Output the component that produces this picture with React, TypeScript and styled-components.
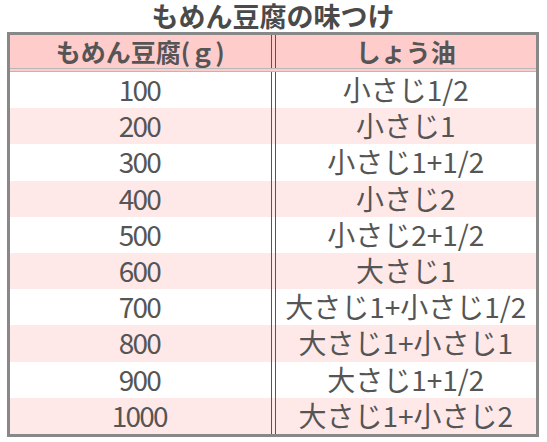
import React from "react";
import styled, { createGlobalStyle } from "styled-components";

const GlobalStyle = createGlobalStyle`
  html, body { margin: 0; padding: 0; background: #ffffff; }
  body {
    font-family: "Noto Sans CJK JP", "Noto Sans", sans-serif;
    color: #555555;
  }
`;

const Page = styled.div`
  width: 547px;
  padding: 0 8px 0 7px;
  box-sizing: border-box;
`;

const Title = styled.h1`
  margin: 0;
  height: 32px;
  font-size: 27px;
  line-height: 32px;
  font-weight: 700;
  text-align: center;
  color: #4a4a4a;
`;

const Table = styled.div`
  border: 3px solid #888888;
  display: flex;
  flex-direction: column;
`;

const Row = styled.div<{ $bg: string; $header?: boolean }>`
  display: grid;
  grid-template-columns: 1fr 1fr;
  column-gap: 3px;
  background: ${(p) => p.$bg};
  height: ${(p) => (p.$header ? "33px" : "36.2px")};
  ${(p) => (p.$header ? "border-bottom: 4px double #b8b8b8;" : "")}
`;

const Cell = styled.div<{ $side: "left" | "right"; $header?: boolean }>`
  display: flex;
  align-items: center;
  justify-content: center;
  ${(p) =>
    p.$side === "left"
      ? "border-right: 1px solid #555555;"
      : "border-left: 1px solid #555555;"}
  font-size: ${(p) => (p.$header ? "25px" : "28px")};
  font-weight: ${(p) => (p.$header ? 700 : 400)};
  color: #555555;
  white-space: nowrap;
  line-height: 1;
  padding-bottom: ${(p) => (p.$header ? "0" : "2px")};
`;

const Num = styled.span`
  letter-spacing: -1.8px;
  margin-right: 1.8px;
`;

function Text({ value }: { value: string }) {
  const parts = value.split(/([0-9]+)/).filter((s) => s.length > 0);
  return (
    <>
      {parts.map((p, i) =>
        /^[0-9]+$/.test(p) ? <Num key={i}>{p}</Num> : <span key={i}>{p}</span>
      )}
    </>
  );
}

const rows: [string, string][] = [
  ["100", "小さじ1/2"],
  ["200", "小さじ1"],
  ["300", "小さじ1+1/2"],
  ["400", "小さじ2"],
  ["500", "小さじ2+1/2"],
  ["600", "大さじ1"],
  ["700", "大さじ1+小さじ1/2"],
  ["800", "大さじ1+小さじ1"],
  ["900", "大さじ1+1/2"],
  ["1000", "大さじ1+小さじ2"],
];

export default function App() {
  return (
    <>
      <GlobalStyle />
      <Page>
        <Title>もめん豆腐の味つけ</Title>
        <Table>
          <Row $bg="#ffcccc" $header>
            <Cell $side="left" $header>もめん豆腐(ｇ)</Cell>
            <Cell $side="right" $header>しょう油</Cell>
          </Row>
          {rows.map(([g, s], i) => (
            <Row key={g} $bg={i % 2 === 0 ? "#ffffff" : "#ffe8e8"}>
              <Cell $side="left">
                <Text value={g} />
              </Cell>
              <Cell $side="right">
                <Text value={s} />
              </Cell>
            </Row>
          ))}
        </Table>
      </Page>
    </>
  );
}
